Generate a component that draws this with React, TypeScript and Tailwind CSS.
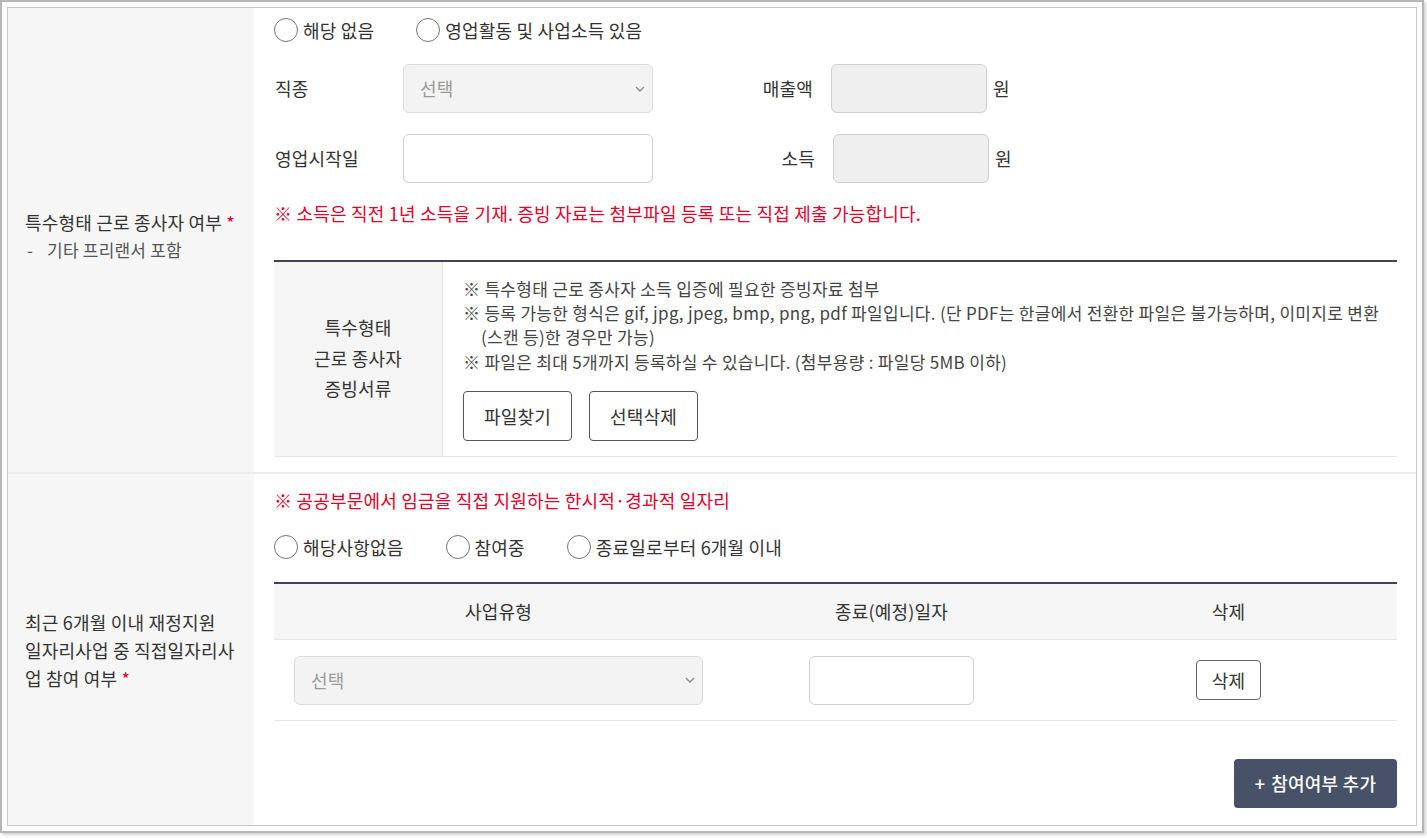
import type { ReactNode } from "react";

/*
  Application form fragment: two label/content rows inside a framed box.
   - Row 1: special employment (freelancer) status with income fields and
     an attachment table.
   - Row 2: participation in direct job programmes with a small table.
*/

function Radio({ label }: { label: string }) {
  return (
    <label className="flex items-center gap-[5px]">
      <span className="h-[24px] w-[24px] shrink-0 rounded-full border-[1.5px] border-[#747474] bg-white" />
      <span>{label}</span>
    </label>
  );
}

function Chevron() {
  return (
    <svg viewBox="0 0 10 6" className="h-[6px] w-[10px]" fill="none">
      <polyline points="1,1 5,5 9,1" stroke="#8a8a8a" strokeWidth="1.4" />
    </svg>
  );
}

function FakeSelect({ width }: { width: string }) {
  return (
    <div
      className={`flex h-[49px] ${width} items-center justify-between rounded-[6px] border border-[#dcdcdc] bg-[#f3f3f3] pl-[16px] pr-[7px] text-[#9a9a9a]`}
    >
      <span>선택</span>
      <Chevron />
    </div>
  );
}

function Cell({ children }: { children: ReactNode }) {
  return <div className="flex items-center justify-center">{children}</div>;
}

export default function App() {
  return (
    <div className="min-h-screen bg-white font-['Noto_Sans_CJK_KR','Noto_Sans',sans-serif] text-[18px] tracking-[0.2px] text-[#333]">
      <div className="h-[833px] w-[1424px] border-2 border-[#b6b6b6] bg-white p-[5px] shadow-[2px_2px_3px_rgba(0,0,0,0.18)]">
        <div className="flex h-full flex-col border border-[#c8c8c8]">
          {/* ---------- Row 1 ---------- */}
          <div className="flex border-b-2 border-[#ececec]">
            <div className="flex w-[246px] shrink-0 flex-col justify-center bg-[#f6f6f6] pb-[8px] pl-[17px] leading-[27px]">
              <p>
                특수형태 근로 종사자 여부 <span className="text-[#e4002b]">*</span>
              </p>
              <p className="flex pl-[2px] text-[17px] text-[#555]">
                <span>-</span>
                <span className="ml-[14px]">기타 프리랜서 포함</span>
              </p>
            </div>

            <div className="flex-1 pb-[15px] pl-[20px] pr-[19px] pt-[10px]">
              <div className="flex h-[24px] items-center gap-[42px]">
                <Radio label="해당 없음" />
                <Radio label="영업활동 및 사업소득 있음" />
              </div>

              <div className="mt-[22px] flex h-[49px] items-center">
                <span className="w-[129px] pl-[1px]">직종</span>
                <FakeSelect width="w-[250px]" />
                <span className="w-[178px] pr-[18px] text-right">매출액</span>
                <div className="h-[49px] w-[156px] rounded-[6px] border border-[#cfcfcf] bg-[#efefef]" />
                <span className="ml-[6px]">원</span>
              </div>

              <div className="mt-[21px] flex h-[49px] items-center">
                <span className="w-[129px] pl-[1px]">영업시작일</span>
                <div className="h-[49px] w-[250px] rounded-[6px] border border-[#cfcfcf] bg-white" />
                <span className="w-[180px] pr-[18px] text-right">소득</span>
                <div className="h-[49px] w-[156px] rounded-[6px] border border-[#cfcfcf] bg-[#efefef]" />
                <span className="ml-[6px]">원</span>
              </div>

              <p className="mt-[18px] leading-[24px] text-[#e4002b]">
                ※ 소득은 직전 1년 소득을 기재. 증빙 자료는 첨부파일 등록 또는 직접 제출 가능합니다.
              </p>

              <div className="mt-[35px] flex border-b border-t-2 border-b-[#e6e6e6] border-t-[#3f4455]">
                <div className="flex w-[169px] shrink-0 flex-col items-center justify-center border-r border-[#e6e6e6] bg-[#f5f5f5] pb-[2px] leading-[30.5px]">
                  <span>특수형태</span>
                  <span>근로 종사자</span>
                  <span>증빙서류</span>
                </div>
                <div className="flex-1 pb-[15px] pl-[20px] pt-[15px] text-[17px] tracking-[0.3px] text-[#444]">
                  <p className="leading-[24px]">※ 특수형태 근로 종사자 소득 입증에 필요한 증빙자료 첨부</p>
                  <p className="pl-[18px] -indent-[18px] leading-[24px]">
                    ※ 등록 가능한 형식은 gif, jpg, jpeg, bmp, png, pdf 파일입니다. (단 PDF는 한글에서 전환한 파일은 불가능하며, 이미지로 변환
                    <br />
                    (스캔 등)한 경우만 가능)
                  </p>
                  <p className="leading-[25px]">※ 파일은 최대 5개까지 등록하실 수 있습니다. (첨부용량 : 파일당 5MB 이하)</p>
                  <div className="mt-[17px] flex gap-[17px] text-[18px] tracking-[0.2px] text-[#333]">
                    <button className="h-[50px] w-[109px] rounded-[4px] border border-[#555]">파일찾기</button>
                    <button className="h-[50px] w-[109px] rounded-[4px] border border-[#555]">선택삭제</button>
                  </div>
                </div>
              </div>
            </div>
          </div>

          {/* ---------- Row 2 ---------- */}
          <div className="flex flex-1">
            <div className="flex w-[246px] shrink-0 flex-col justify-center bg-[#f6f6f6] pl-[17px] leading-[28px]">
              <p>최근 6개월 이내 재정지원</p>
              <p>일자리사업 중 직접일자리사</p>
              <p>
                업 참여 여부 <span className="text-[#e4002b]">*</span>
              </p>
            </div>

            <div className="flex flex-1 flex-col pb-[17px] pl-[20px] pr-[19px] pt-[14px]">
              <p className="leading-[24px] text-[#e4002b]">※ 공공부문에서 임금을 직접 지원하는 한시적·경과적 일자리</p>

              <div className="mt-[23px] flex h-[24px] items-center gap-[42px]">
                <Radio label="해당사항없음" />
                <Radio label="참여중" />
                <Radio label="종료일로부터 6개월 이내" />
              </div>

              <div className="mt-[23px] border-t-2 border-[#3f4455]">
                <div className="grid h-[56px] grid-cols-[449px_337px_1fr] border-b border-[#e8e8e8] bg-[#f5f5f5]">
                  <Cell>사업유형</Cell>
                  <Cell>종료(예정)일자</Cell>
                  <Cell>삭제</Cell>
                </div>
                <div className="grid h-[81px] grid-cols-[449px_337px_1fr] border-b border-[#e8e8e8]">
                  <div className="flex items-center px-[20px]">
                    <FakeSelect width="w-full" />
                  </div>
                  <Cell>
                    <div className="h-[49px] w-[165px] rounded-[6px] border border-[#cfcfcf] bg-white" />
                  </Cell>
                  <Cell>
                    <button className="h-[40px] w-[65px] rounded-[4px] border border-[#666]">삭제</button>
                  </Cell>
                </div>
              </div>

              <div className="mt-[38px] flex justify-end">
                <button className="flex h-[49px] w-[163px] items-center justify-center gap-[6px] rounded-[4px] bg-[#475168] text-[18px] font-medium text-white">
                  <span>+</span>
                  <span>참여여부 추가</span>
                </button>
              </div>
            </div>
          </div>
        </div>
      </div>
    </div>
  );
}
